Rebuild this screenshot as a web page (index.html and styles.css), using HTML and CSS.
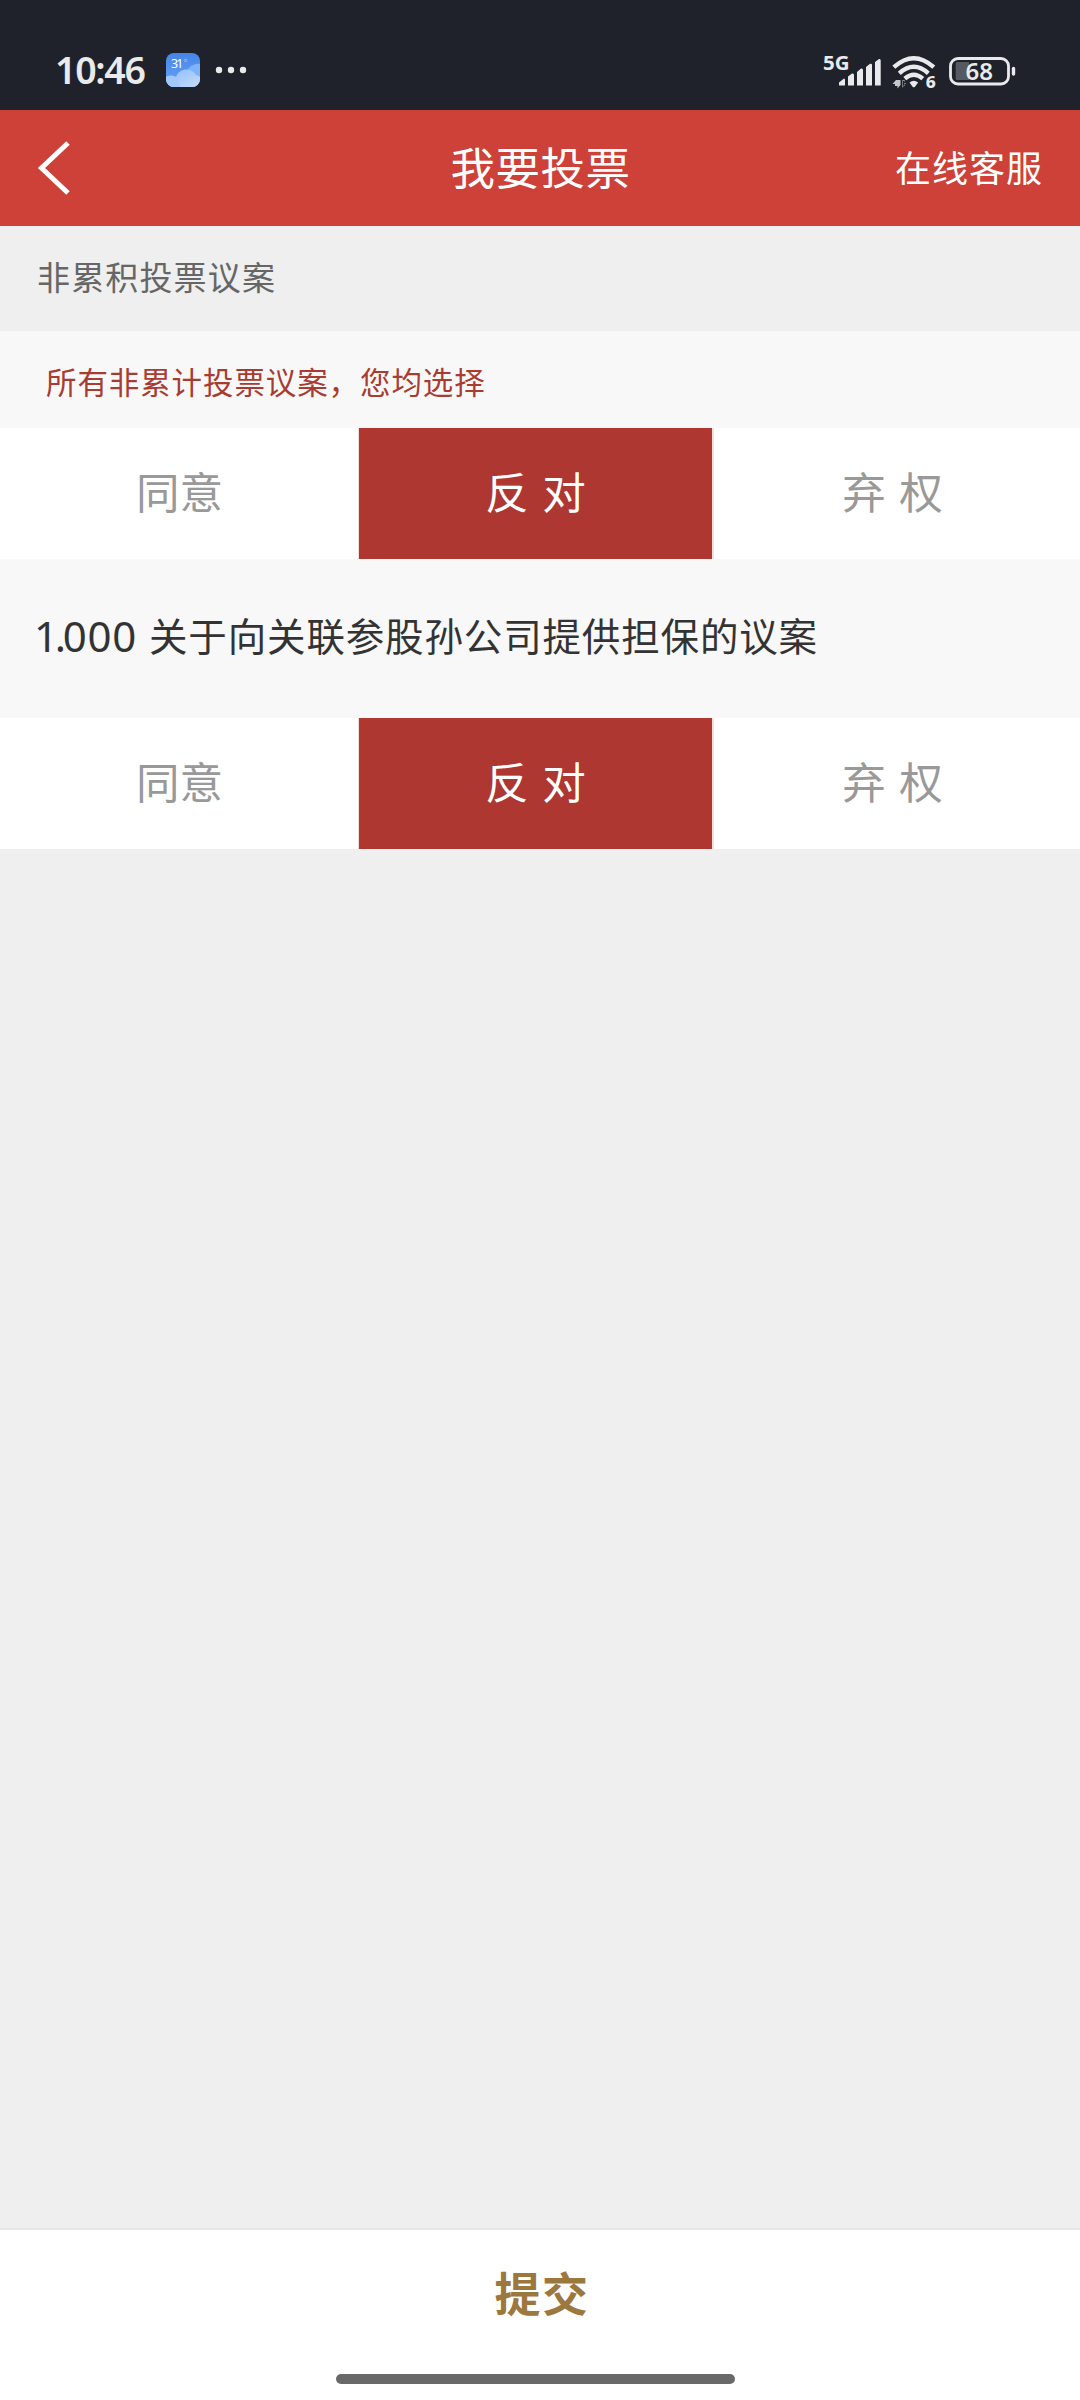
FILE: index.html
```html
<!DOCTYPE html>
<html lang="zh-CN">
<head>
<meta charset="utf-8">
<title>我要投票</title>
<link rel="stylesheet" href="styles.css">
</head>
<body>
<div class="app">
  <div class="status">
    <div class="status-left">
      <span class="time">10:46</span>
      <svg class="weather" width="34" height="34" viewBox="0 0 34 34">
        <defs>
          <linearGradient id="sky" x1="0" y1="0" x2="0" y2="1"><stop offset="0" stop-color="#4585e8"/><stop offset="1" stop-color="#67a5f5"/></linearGradient>
          <linearGradient id="cloud" x1="0" y1="0" x2="1" y2="1"><stop offset="0" stop-color="#8abafa"/><stop offset="1" stop-color="#c6dcfb"/></linearGradient>
          <clipPath id="tile"><rect width="34" height="34" rx="8"/></clipPath>
        </defs>
        <g clip-path="url(#tile)">
          <rect width="34" height="34" fill="url(#sky)"/>
          <path d="M21 18C23 13 29 10 34 11V34H21Z" fill="#7db3f8"/>
          <path d="M0 24C3 22 7 22 10 24C13 15 25 14 30 22C31 22 33 23 34 24V34H0Z" fill="url(#cloud)"/>
          <path d="M0 24C7 21 13 25 14 34H0Z" fill="#a0c8fb"/>
        </g>
        <text x="5" y="15" font-size="12.5" textLength="12.5" fill="#fff">31</text>
        <circle cx="19.6" cy="7.5" r="1.2" fill="none" stroke="#a9cbfa" stroke-width=".7"/>
      </svg>
      <svg width="32" height="8" viewBox="0 0 32 8" fill="#e9eaeb"><circle cx="4" cy="4" r="3.2"/><circle cx="16" cy="4" r="3.2"/><circle cx="28" cy="4" r="3.2"/></svg>
    </div>
    <svg class="status-right" width="196" height="40" viewBox="820 48 196 40" fill="#e9eaeb">
      <text x="823" y="67.700" font-size="20" font-weight="700" textLength="26.500" lengthAdjust="spacingAndGlyphs">5G</text>
      <path d="M839 83V80.500L844 76.500Q845 76.500 845 78V83Q845 83.500 844 83.500H840Q839 83.500 839 83Z"/>
      <path d="M848 74.500L852 71.500Q854 71 854 73V83.500H848ZM857 70L861 66.500Q863 66 863 68V83.500H857ZM866 65L870 61.800Q872 61.300 872 63V83.500H866ZM875 60L879 57Q880.700 56.500 880.700 58.500V83.500H875Z"/>
      <g fill="none" stroke="#e9eaeb" stroke-width="4.400">
        <path d="M893.800 65.200Q913.800 47.200 933.800 65.200"/>
        <path d="M899.300 71.300Q913.800 58.300 928.300 71.300"/>
        <path d="M904.800 76.600Q913.800 68.800 922.800 76.600"/>
      </g>
      <path d="M909.500 80.500Q913.800 77 918.100 80.500L915 84.700Q913.800 85.700 912.600 84.700Z"/>
      <path d="M896 78L892.500 82H895V84H898V78ZM899 78H897.500V86.500L900.500 83V78ZM902 78V84H904.500V78ZM903 78L906 82H904.500L902.500 86V78Z" fill="#c5c7ca"/>
      <text x="925.800" y="86" font-size="16.500" font-weight="800" textLength="10" lengthAdjust="spacingAndGlyphs">6</text>
      <path d="M963 60H957Q955.700 60 955.700 61.500V76.500Q955.700 78 957 78H969V60Z" fill="#555962"/>
      <rect x="950.500" y="56.500" width="58" height="25.500" rx="7.500" fill="none" stroke="#e9eaeb" stroke-width="2.800"/>
      <rect x="1011.800" y="64.800" width="3.400" height="9" rx="1.700"/>
      <text x="965.500" y="78" font-size="23" font-weight="600" textLength="27.500" lengthAdjust="spacingAndGlyphs">68</text>
    </svg>
  </div>

  <header class="header">
    <svg class="back" width="36" height="56" viewBox="0 0 36 56"><path d="M31 3L4.500 28L31 53" fill="none" stroke="#fff" stroke-width="5"/></svg>
    <h1 class="title">我要投票</h1>
    <a class="service">在线客服</a>
  </header>

  <div class="section">非累积投票议案</div>
  <div class="hint">所有非累计投票议案，您均选择</div>
  <div class="options">
    <div class="option">同意</div>
    <div class="option option-selected">反<i class="gap"></i>对</div>
    <div class="option option-last">弃<i class="gap"></i>权</div>
  </div>
  <div class="proposal"><span class="number"><span class="lead">1.</span>000</span><span>关于向关联参股孙公司提供担保的议案</span></div>
  <div class="options">
    <div class="option">同意</div>
    <div class="option option-selected">反<i class="gap"></i>对</div>
    <div class="option option-last">弃<i class="gap"></i>权</div>
  </div>

  <footer class="footer">
    <div class="submit">提交</div>
    <div class="home-bar"></div>
  </footer>
</div>
</body>
</html>
```

FILE: styles.css
```css
* { box-sizing: border-box; }
body {
  margin: 0;
  background: #efefef;
  font-family: "Noto Sans CJK SC", sans-serif;
}
.app {
  width: 1080px;
  height: 2400px;
  display: flex;
  flex-direction: column;
  overflow: hidden;
}
.status {
  height: 110px;
  padding: 30px 64px 0 55px;
  background: #1f222b;
  display: flex;
  justify-content: space-between;
  align-items: center;
  font-family: "Noto Sans", sans-serif;
}
.status-left { display: flex; align-items: center; }
.status-right { overflow: visible; }
.time {
  width: 111px;
  color: #e9eaeb;
  font-size: 37.500px;
  line-height: 40px;
  font-weight: 600;
  letter-spacing: -1.3px;
}
.weather { margin-right: 15px; }
.header {
  height: 116px;
  padding: 0 37px 0 37px;
  background: #cd4139;
  color: #fff;
  display: grid;
  grid-template-columns: 1fr auto 1fr;
  align-items: center;
}
.title {
  margin: 0;
  padding: 0 0 4px 1px;
  font-size: 44.500px;
  line-height: 60px;
  font-weight: 400;
  letter-spacing: 0.5px;
}
.service {
  justify-self: end;
  padding-bottom: 4px;
  font-size: 36px;
  line-height: 50px;
  letter-spacing: 1px;
}
.section {
  height: 105px;
  padding-left: 37px;
  color: #666;
  font-size: 33px;
  line-height: 101px;
  letter-spacing: 1.15px;
}
.hint {
  height: 97px;
  padding-left: 46px;
  background: #f8f8f8;
  color: #a83c33;
  font-size: 30.500px;
  line-height: 101px;
  letter-spacing: 0.9px;
}
.options {
  height: 131px;
  background: #fff;
  display: grid;
  grid-template-columns: 359px 353px 1fr;
  color: #999;
  font-size: 43.500px;
  line-height: 125px;
}
.option {
  display: flex;
  justify-content: center;
}
.option-selected {
  background: #ae3731;
  box-shadow: -1px 0 #f3dcda, 2px 0 #f3e0df;
  color: #fff;
}
.option-last { padding-right: 7px; }
.gap { width: 13.500px; }
.proposal {
  height: 159px;
  padding-left: 34px;
  background: #f8f8f8;
  color: #333;
  display: flex;
  font-size: 38.500px;
  line-height: 151px;
  letter-spacing: 0.85px;
}
.number {
  width: 115px;
  font-family: "Noto Sans", sans-serif;
  font-size: 42px;
  line-height: 153px;
  letter-spacing: 0.8px;
}
.lead { letter-spacing: -3.3px; }
.footer {
  height: 172px;
  margin-top: auto;
  border-top: 2px solid #e5e5e5;
  background: #fff;
  display: flex;
  flex-direction: column;
  align-items: center;
}
.submit {
  height: 144px;
  padding-left: 4px;
  color: #9c783f;
  font-size: 46px;
  line-height: 122px;
  font-weight: 700;
  letter-spacing: 1.5px;
}
.home-bar {
  width: 399px;
  height: 10px;
  margin-right: 9px;
  border-radius: 5px;
  background: #696969;
}
```
